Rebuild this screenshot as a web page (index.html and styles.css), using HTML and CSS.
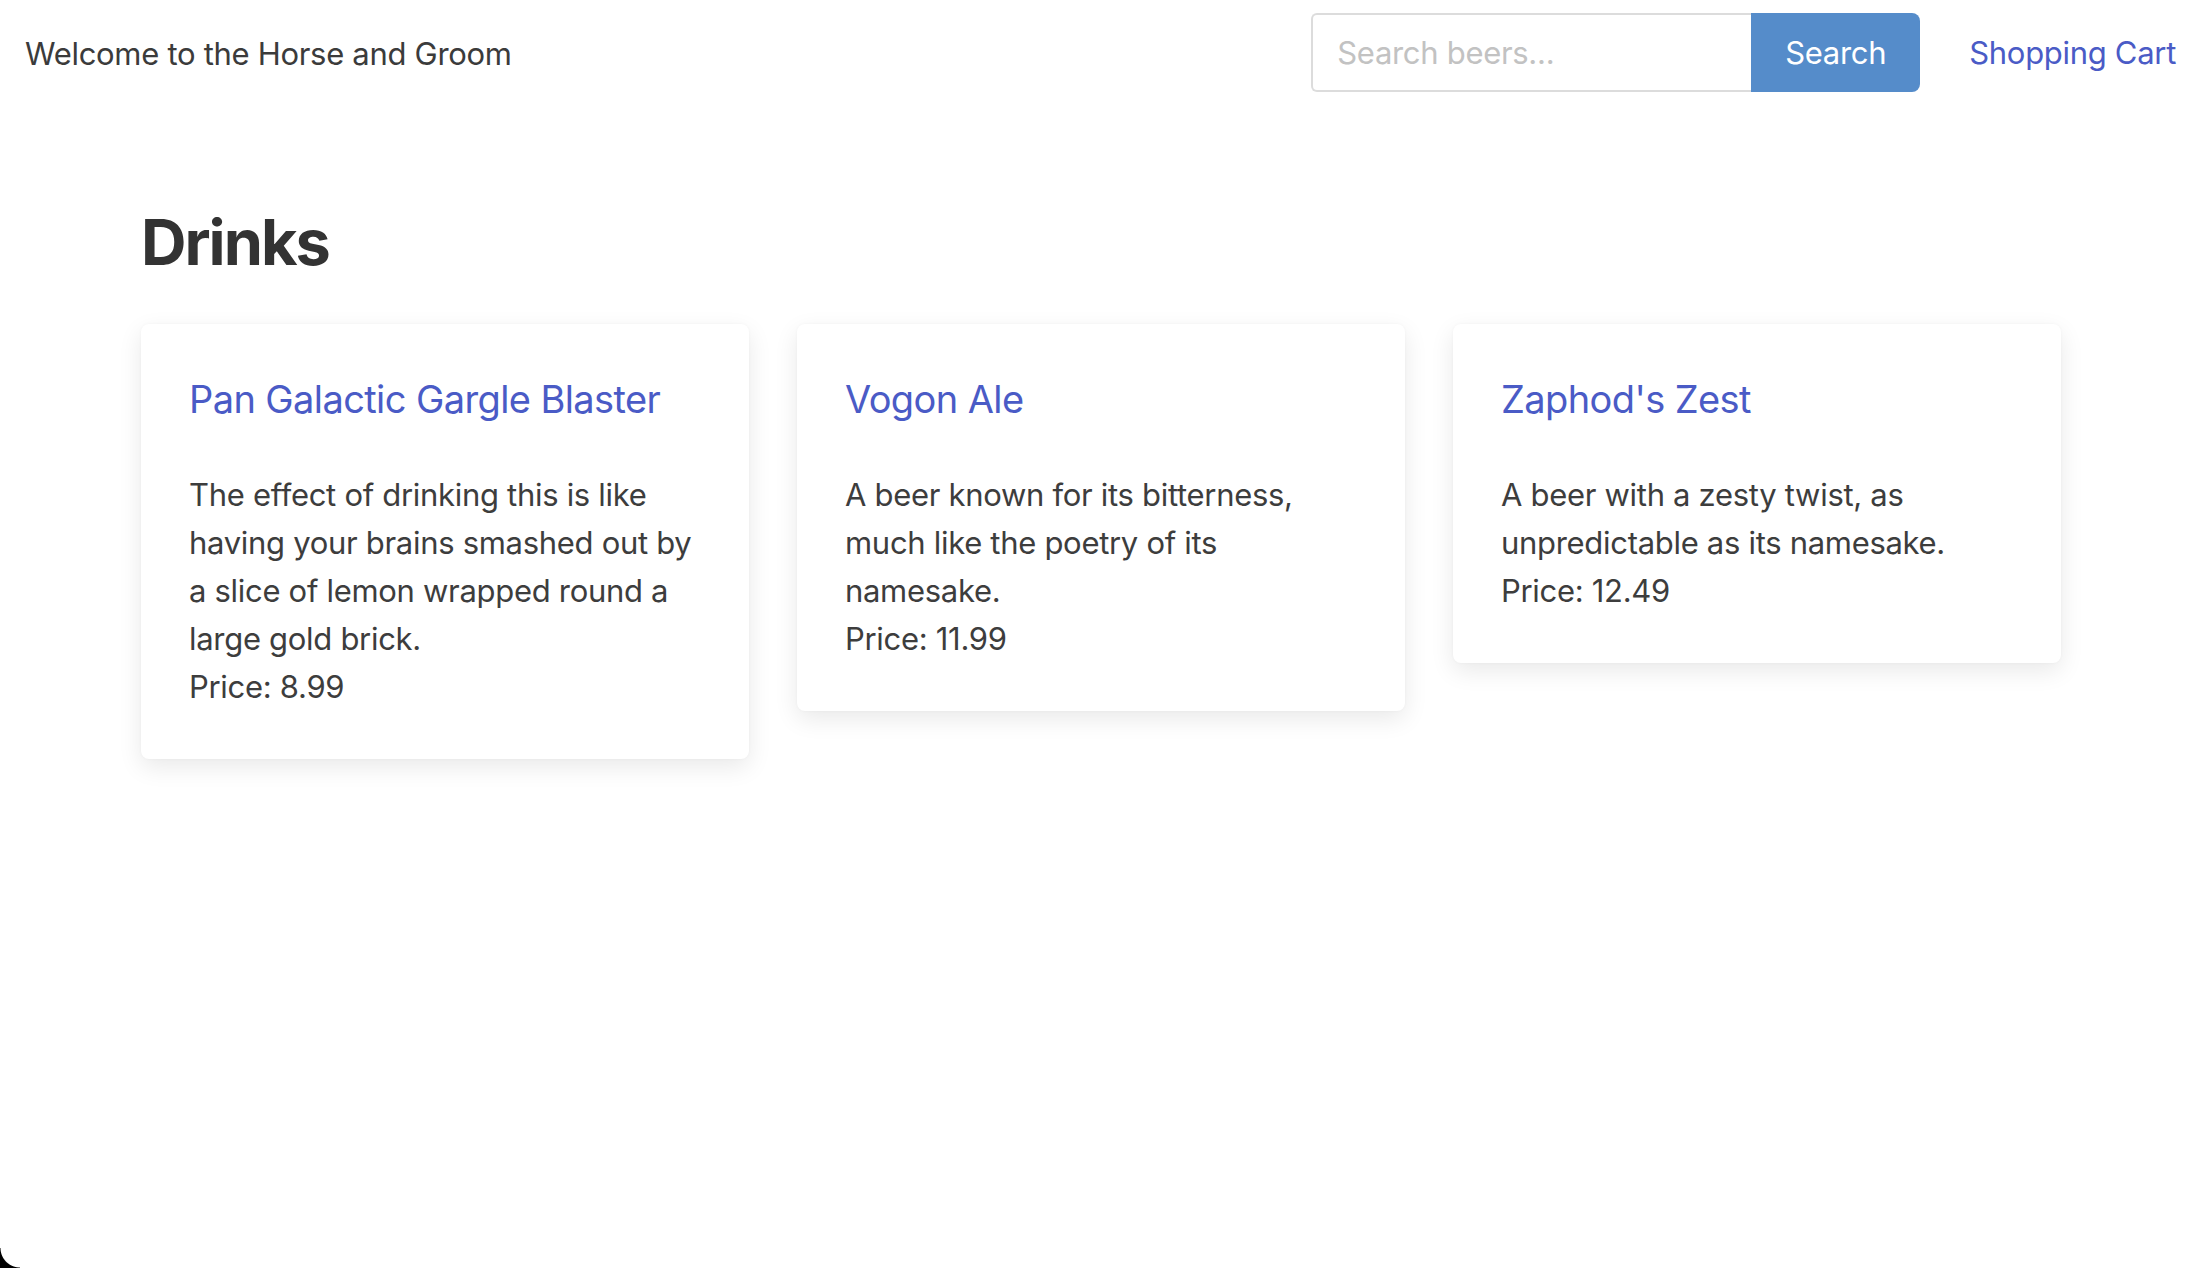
FILE: index.html
```html
<!DOCTYPE html>
<html lang="en">
<head>
<meta charset="utf-8">
<title>Horse and Groom</title>
<link rel="stylesheet" href="styles.css">
</head>
<body>
<header class="topbar">
  <div class="brand">Welcome to the Horse and Groom</div>
  <div class="nav">
    <form class="search" onsubmit="return false">
      <input class="search-input" type="text" placeholder="Search beers...">
      <button class="search-btn" type="submit">Search</button>
    </form>
    <a class="cart" href="#">Shopping Cart</a>
  </div>
</header>
<main class="content">
  <h1 class="heading">Drinks</h1>
  <div class="grid">
    <div class="card">
      <h2 class="card-title">Pan Galactic Gargle Blaster</h2>
      <p class="card-text">The effect of drinking this is like having your brains smashed out by a slice of lemon wrapped round a large gold brick.</p>
      <p class="card-price">Price: 8.99</p>
    </div>
    <div class="card">
      <h2 class="card-title">Vogon Ale</h2>
      <p class="card-text">A beer known for its bitterness, much like the poetry of its namesake.</p>
      <p class="card-price">Price: 11.99</p>
    </div>
    <div class="card">
      <h2 class="card-title">Zaphod's Zest</h2>
      <p class="card-text">A beer with a zesty twist, as unpredictable as its namesake.</p>
      <p class="card-price">Price: 12.49</p>
    </div>
  </div>
</main>
<div class="corner"></div>
</body>
</html>
```
FILE: styles.css
```css
* { box-sizing: border-box; }

html, body {
  margin: 0;
  padding: 0;
  background: #ffffff;
}

body {
  font-family: Inter, "Noto Sans", "Liberation Sans", sans-serif;
  color: #333333;
  min-height: 1268px;
}

.topbar {
  display: flex;
  align-items: center;
  justify-content: space-between;
  height: 104px;
  padding: 0 20px 0 25px;
}

.brand {
  font-size: 31px;
  color: #3b3b3b;
  letter-spacing: -0.3px;
  padding-top: 2px;
}

.nav {
  display: flex;
  align-items: center;
  gap: 49px;
}

.search {
  display: flex;
  margin: 0;
}

.search-input {
  width: 440px;
  height: 79px;
  border: 2px solid #dcdcdc;
  border-right: none;
  border-radius: 6px 0 0 6px;
  padding: 0 24px;
  font-family: inherit;
  font-size: 31px;
  color: #333;
  outline: none;
  letter-spacing: -0.3px;
}

.search-input::placeholder {
  color: #c2c2c2;
}

.search-btn {
  width: 169px;
  height: 79px;
  border: none;
  border-radius: 0 8px 8px 0;
  background: #558cca;
  color: #ffffff;
  font-family: inherit;
  font-size: 31px;
  letter-spacing: -0.3px;
  cursor: pointer;
}

.cart {
  font-size: 31px;
  color: #4a5bc6;
  text-decoration: none;
  letter-spacing: -0.3px;
}

.content {
  padding: 0 0 0 141px;
}

.heading {
  margin: 0;
  padding-top: 98px;
  font-size: 63px;
  line-height: 80px;
  font-weight: 700;
  color: #333333;
  letter-spacing: -2px;
}

.grid {
  display: grid;
  grid-template-columns: repeat(3, 608px);
  gap: 48px;
  align-items: start;
  margin-top: 42px;
}

.card {
  background: #ffffff;
  border-radius: 8px;
  padding: 48px;
  box-shadow: 0 8px 24px rgba(0, 0, 0, 0.09), 0 0 3px rgba(0, 0, 0, 0.04);
}

.card-title {
  margin: 0 0 48px;
  padding-top: 3px;
  font-size: 38px;
  line-height: 48px;
  font-weight: 400;
  color: #4a5bc6;
  letter-spacing: -0.6px;
}

.card-text,
.card-price {
  margin: 0;
  font-size: 31px;
  line-height: 48px;
  color: #3d3d3d;
  letter-spacing: -0.3px;
}

.corner {
  position: fixed;
  left: 0;
  bottom: 0;
  width: 20px;
  height: 20px;
  background: radial-gradient(circle at 100% 0, transparent 19px, #000 20px);
}
```
